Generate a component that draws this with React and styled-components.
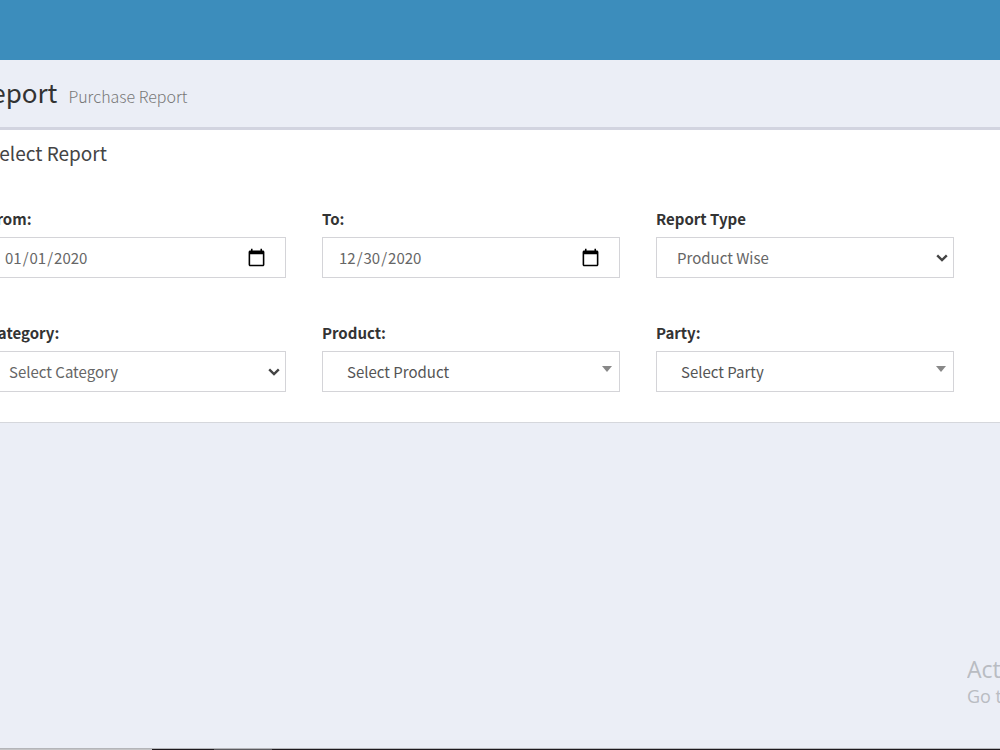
import React, { useState } from 'react';
import styled, { createGlobalStyle } from 'styled-components';

const GlobalStyle = createGlobalStyle`
  * {
    box-sizing: border-box;
  }

  body {
    margin: 0;
    overflow: hidden;
    font-family: 'Noto Sans CJK SC', 'Noto Sans', sans-serif;
    font-size: 16px;
    color: #333;
  }
`;

const Page = styled.div`
  position: relative;
  display: flex;
  flex-direction: column;
  min-height: 100vh;
  overflow: hidden;
  background-color: #ebeef6;
`;

const TopBar = styled.header`
  height: 60px;
  background-color: #3c8dbc;
`;

const ContentHeader = styled.div`
  display: flex;
  align-items: baseline;
  gap: 11px;
  height: 67px;
  margin-left: -25px;
  padding-top: 14px;
  white-space: nowrap;
`;

const Title = styled.h1`
  margin: 0;
  font-size: 26px;
  line-height: 36px;
  font-weight: 400;
  color: #333;
`;

const Subtitle = styled.small`
  font-size: 16px;
  line-height: 24px;
  font-weight: 300;
  color: #777;
`;

const Box = styled.section`
  margin-left: -12px;
  padding-bottom: 30px;
  border-top: 3px solid #d2d4e0;
  border-bottom: 1px solid #d5d7dc;
  background-color: #fff;
`;

const BoxTitle = styled.h3`
  margin: 0;
  padding-top: 9px;
  font-size: 19px;
  line-height: 28px;
  font-weight: 400;
  color: #444;
`;

const Fields = styled.form`
  display: grid;
  grid-template-columns: repeat(3, 1fr);
  gap: 45px 36px;
  padding: 42px 46px 0 0;
`;

const Field = styled.div`
  display: flex;
  flex-direction: column;
  gap: 8px;
`;

const Label = styled.label`
  font-size: 15px;
  line-height: 20px;
  font-weight: 700;
`;

const DateInput = styled.input`
  width: 100%;
  height: 41px;
  padding: 0 19px 0 15px;
  border: 1px solid #d4d4d8;
  border-radius: 0;
  background-color: #fff;
  font-family: inherit;
  font-size: 15px;
  color: #666;

  &::-webkit-datetime-edit-fields-wrapper {
    padding: 0;
  }

  &::-webkit-calendar-picker-indicator {
    width: 19px;
    height: 19px;
    padding: 0;
    background-size: 19px 19px;
  }
`;

const SelectWrap = styled.div`
  position: relative;
`;

const Select = styled.select`
  display: block;
  width: 100%;
  height: 41px;
  padding: 0 32px 0 ${({ $search }) => ($search ? '24px' : '20px')};
  border: 1px solid #d4d4d8;
  border-radius: 0;
  appearance: none;
  background-color: #fff;
  font-family: inherit;
  font-size: 15px;
  color: ${({ $search }) => ($search ? '#555' : '#666')};
`;

const Chevron = styled.svg`
  position: absolute;
  top: 17px;
  right: 6px;
  width: 12px;
  height: 8px;
  pointer-events: none;
`;

const Caret = styled.span`
  position: absolute;
  top: 15px;
  right: 8px;
  border: 5px solid transparent;
  border-top: 6px solid #888;
  border-bottom: 0;
  pointer-events: none;
`;

const Watermark = styled.div`
  position: absolute;
  right: 0;
  bottom: 42px;
  width: 33px;
  overflow: hidden;
  font-family: 'Open Sans', sans-serif;
  white-space: nowrap;
  color: #b9bcc2;
`;

const WatermarkTitle = styled.div`
  font-size: 23px;
  line-height: 30px;
`;

const WatermarkText = styled.div`
  font-size: 18px;
  line-height: 24px;
`;

const Taskbar = styled.footer`
  display: flex;
  height: 2px;
  margin-top: auto;
  border-top: 1px solid #b4b5b9;
  background-color: #1d191e;
`;

const TaskbarItem = styled.span`
  width: ${({ $width }) => $width}px;
  background-color: ${({ $color }) => $color};
`;

const DateField = ({ id, label, initial }) => {
  const [value, setValue] = useState(initial);

  return (
    <Field>
      <Label htmlFor={id}>{label}</Label>
      <DateInput id={id} type="date" value={value} onChange={(e) => setValue(e.target.value)} />
    </Field>
  );
};

const SelectField = ({ id, label, option, search }) => (
  <Field>
    <Label htmlFor={id}>{label}</Label>
    <SelectWrap>
      <Select id={id} $search={search}>
        <option>{option}</option>
      </Select>
      {search ? (
        <Caret />
      ) : (
        <Chevron viewBox="0 0 12 8" fill="none" stroke="#444" strokeWidth="2.4">
          <path d="M1.2 1.3 6 6 10.8 1.3" />
        </Chevron>
      )}
    </SelectWrap>
  </Field>
);

const App = () => (
  <>
    <GlobalStyle />
    <Page>
      <TopBar />
      <main>
        <ContentHeader>
          <Title>Report</Title>
          <Subtitle>Purchase Report</Subtitle>
        </ContentHeader>
        <Box>
          <BoxTitle>Select Report</BoxTitle>
          <Fields>
            <DateField id="from" label="From:" initial="2020-01-01" />
            <DateField id="to" label="To:" initial="2020-12-30" />
            <SelectField id="type" label="Report Type" option="Product Wise" />
            <SelectField id="category" label="Category:" option="Select Category" />
            <SelectField id="product" label="Product:" option="Select Product" search />
            <SelectField id="party" label="Party:" option="Select Party" search />
          </Fields>
        </Box>
      </main>
      <Watermark>
        <WatermarkTitle>Activate Windows</WatermarkTitle>
        <WatermarkText>Go to Settings to activate Windows.</WatermarkText>
      </Watermark>
      <Taskbar>
        <TaskbarItem $width={152} $color="#c4c4c6" />
        <TaskbarItem $width={62} $color="#1d191e" />
        <TaskbarItem $width={58} $color="#5c5b60" />
      </Taskbar>
    </Page>
  </>
);

export default App;
